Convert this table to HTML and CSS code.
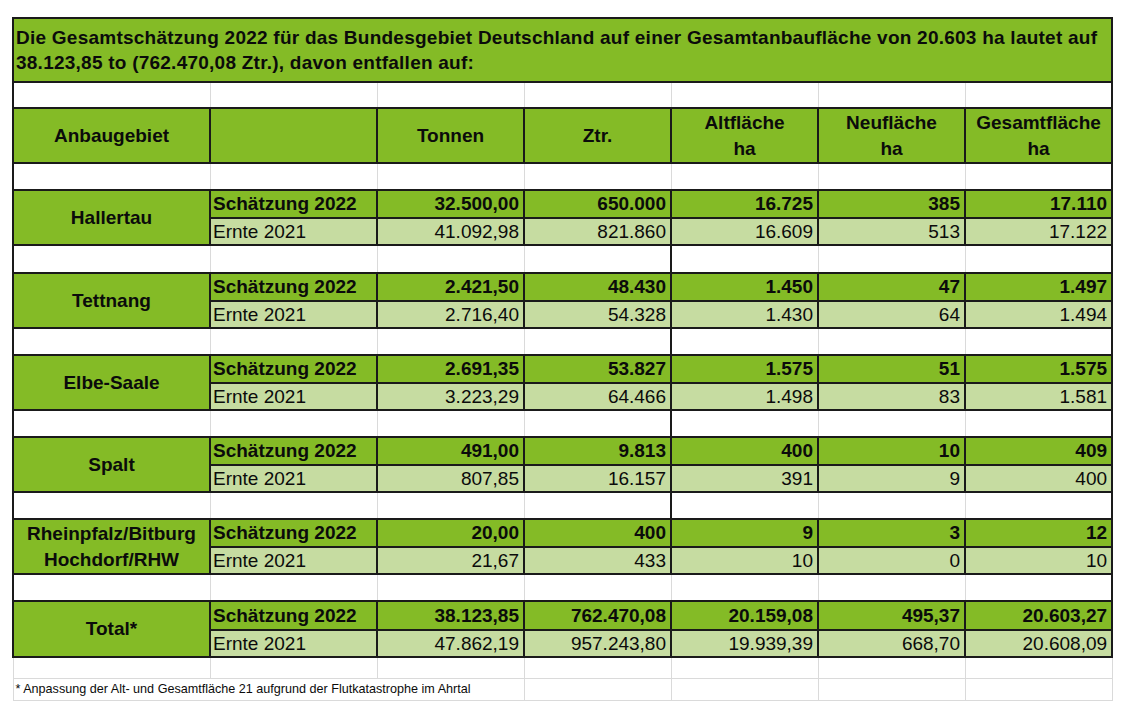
FILE: index.html
```html
<!DOCTYPE html>
<html lang="de">
<head>
<meta charset="utf-8">
<title>Gesamtschätzung 2022</title>
<link rel="stylesheet" href="styles.css">
</head>
<body>
<table class="sheet">
  <colgroup>
    <col class="c-region"><col class="c-label"><col class="c-num"><col class="c-num"><col class="c-num"><col class="c-num"><col class="c-num">
  </colgroup>
  <tbody>
    <tr class="r-title"><td colspan="7" class="title">Die Gesamtschätzung 2022 für das Bundesgebiet Deutschland auf einer Gesamtanbaufläche von 20.603 ha lautet auf<br>38.123,85 to (762.470,08 Ztr.), davon entfallen auf:</td></tr>
    <tr class="r-blank b-first"><td class="el"></td><td></td><td></td><td></td><td></td><td></td><td class="er"></td></tr>
    <tr class="r-head"><th>Anbaugebiet</th><th></th><th>Tonnen</th><th>Ztr.</th><th>Altfläche<br>ha</th><th>Neufläche<br>ha</th><th>Gesamtfläche<br>ha</th></tr>
    <tr class="r-blank"><td class="el"></td><td></td><td></td><td></td><td></td><td></td><td class="er"></td></tr>

    <tr class="r-s"><th rowspan="2" class="region">Hallertau</th><td class="lbl">Schätzung 2022</td><td class="num">32.500,00</td><td class="num">650.000</td><td class="num">16.725</td><td class="num">385</td><td class="num">17.110</td></tr>
    <tr class="r-e"><td class="lbl">Ernte 2021</td><td class="num">41.092,98</td><td class="num">821.860</td><td class="num">16.609</td><td class="num">513</td><td class="num">17.122</td></tr>
    <tr class="r-blank b-tall"><td class="el"></td><td></td><td></td><td></td><td class="dl"></td><td></td><td class="er"></td></tr>

    <tr class="r-s"><th rowspan="2" class="region">Tettnang</th><td class="lbl">Schätzung 2022</td><td class="num">2.421,50</td><td class="num">48.430</td><td class="num">1.450</td><td class="num">47</td><td class="num">1.497</td></tr>
    <tr class="r-e"><td class="lbl">Ernte 2021</td><td class="num">2.716,40</td><td class="num">54.328</td><td class="num">1.430</td><td class="num">64</td><td class="num">1.494</td></tr>
    <tr class="r-blank"><td class="el"></td><td></td><td></td><td></td><td class="dl"></td><td></td><td class="er"></td></tr>

    <tr class="r-s"><th rowspan="2" class="region">Elbe-Saale</th><td class="lbl">Schätzung 2022</td><td class="num">2.691,35</td><td class="num">53.827</td><td class="num">1.575</td><td class="num">51</td><td class="num">1.575</td></tr>
    <tr class="r-e"><td class="lbl">Ernte 2021</td><td class="num">3.223,29</td><td class="num">64.466</td><td class="num">1.498</td><td class="num">83</td><td class="num">1.581</td></tr>
    <tr class="r-blank"><td class="el"></td><td></td><td></td><td></td><td class="dl"></td><td></td><td class="er"></td></tr>

    <tr class="r-s"><th rowspan="2" class="region">Spalt</th><td class="lbl">Schätzung 2022</td><td class="num">491,00</td><td class="num">9.813</td><td class="num">400</td><td class="num">10</td><td class="num">409</td></tr>
    <tr class="r-e"><td class="lbl">Ernte 2021</td><td class="num">807,85</td><td class="num">16.157</td><td class="num">391</td><td class="num">9</td><td class="num">400</td></tr>
    <tr class="r-blank"><td class="el"></td><td></td><td></td><td></td><td class="dl"></td><td></td><td class="er"></td></tr>

    <tr class="r-s"><th rowspan="2" class="region two">Rheinpfalz/Bitburg<br>Hochdorf/RHW</th><td class="lbl">Schätzung 2022</td><td class="num">20,00</td><td class="num">400</td><td class="num">9</td><td class="num">3</td><td class="num">12</td></tr>
    <tr class="r-e"><td class="lbl">Ernte 2021</td><td class="num">21,67</td><td class="num">433</td><td class="num">10</td><td class="num">0</td><td class="num">10</td></tr>
    <tr class="r-blank"><td class="el"></td><td></td><td></td><td></td><td></td><td></td><td class="er"></td></tr>

    <tr class="r-s r-s29"><th rowspan="2" class="region">Total*</th><td class="lbl">Schätzung 2022</td><td class="num">38.123,85</td><td class="num">762.470,08</td><td class="num">20.159,08</td><td class="num">495,37</td><td class="num">20.603,27</td></tr>
    <tr class="r-e"><td class="lbl">Ernte 2021</td><td class="num">47.862,19</td><td class="num">957.243,80</td><td class="num">19.939,39</td><td class="num">668,70</td><td class="num">20.608,09</td></tr>
    <tr class="r-blank r-end"><td></td><td></td><td></td><td></td><td></td><td></td><td></td></tr>
    <tr class="r-note"><td colspan="3" class="note">* Anpassung der Alt- und Gesamtfläche 21 aufgrund der Flutkatastrophe im Ahrtal</td><td></td><td></td><td></td><td></td></tr>
  </tbody>
</table>
</body>
</html>
```

FILE: styles.css
```css
html, body {
  margin: 0;
  background: #ffffff;
}

body {
  font-family: "Liberation Sans", Arial, sans-serif;
  color: #0b0b0b;
}

.sheet {
  border-collapse: collapse;
  table-layout: fixed;
  width: 1099px;
  margin: 17px 0 0 12px;
}

.c-region { width: 197px; }
.c-label { width: 167px; }
.c-num { width: 147px; }

.sheet td,
.sheet th {
  padding: 0 4px;
  font-size: 19px;
  line-height: 22px;
  white-space: nowrap;
  vertical-align: middle;
  border: 2px solid #1a1a1a;
}

/* title */
.r-title { height: 64px; }
.sheet .title {
  background: #84bb26;
  font-weight: bold;
  text-align: left;
  line-height: 25px;
  padding-left: 2px;
  letter-spacing: 0.24px;
}

/* header */
.r-head { height: 55px; }
.r-head th {
  background: #84bb26;
  font-weight: bold;
  text-align: center;
  line-height: 26px;
}

/* blank spacer rows */
.r-blank { height: 27px; }
.b-first { height: 26px; }
.b-tall { height: 28px; }
.r-blank td {
  background: #ffffff;
  border: 1px solid #dadada;
}
.r-blank td.el { border-left: 2px solid #1a1a1a; }
.r-blank td.er { border-right: 2px solid #1a1a1a; }
.r-blank td.dl { border-left: 2px solid #1a1a1a; }

/* estimate / harvest rows */
.r-s { height: 28px; }
.r-s29 { height: 29px; }
.r-e { height: 27px; }

.r-s td {
  background: #84bb26;
  font-weight: bold;
}
.r-e td {
  background: #c6dca1;
  font-weight: normal;
}

.region {
  background: #84bb26;
  font-weight: bold;
  text-align: center;
}
.region.two { line-height: 26px; }

.sheet .lbl {
  text-align: left;
  padding-left: 2px;
}
.num { text-align: right; }

/* bottom rows */
.r-end { height: 21px; }
.r-note { height: 22px; }
.r-note td {
  border: 1px solid #dadada;
  background: #ffffff;
}
.sheet .note {
  font-size: 12.6px;
  line-height: 16px;
  padding-left: 2px;
  text-align: left;
}
```
